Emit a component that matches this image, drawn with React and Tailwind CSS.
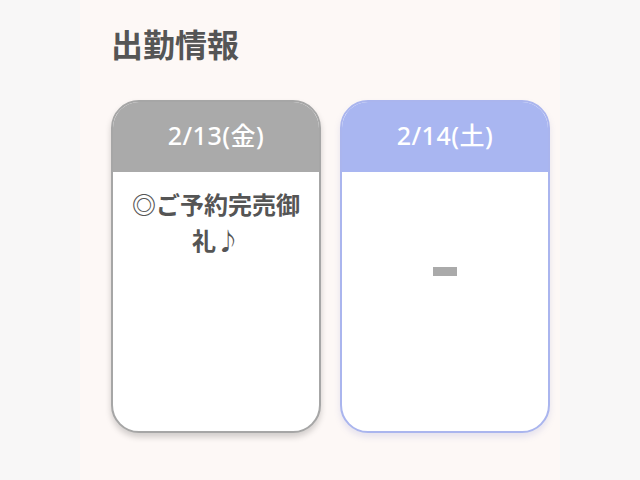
import React from 'react'

const days = [
  { date: '2/13(金)', head: 'bg-[#aaaaaa]', border: 'border-[#a6a6a6]', shadow: 'shadow-[0_4px_6px_rgba(0,0,0,0.18)]', lines: ['◎ご予約完売御', '礼♪'] },
  { date: '2/14(土)', head: 'bg-[#a9b6f1]', border: 'border-[#aab5ee]', shadow: 'shadow-[0_4px_6px_rgba(120,130,200,0.18)]', lines: null },
]

function DayCard({ day }) {
  return (
    <div className={`w-[210px] h-[333px] rounded-[28px] border-2 ${day.border} ${day.shadow} bg-white overflow-hidden flex flex-col`}>
      <div className={`${day.head} h-[70px] shrink-0 flex items-center justify-center text-white text-[25px] font-medium tracking-[0.5px] pb-[2px]`}>
        {day.date}
      </div>
      {day.lines ? (
        <div className="pt-[15px] text-center text-[24px] font-bold leading-[36px] text-[#555555]">
          {day.lines.map((l, i) => <div key={i}>{l}</div>)}
        </div>
      ) : (
        <div className="flex-1 flex items-center justify-center pb-[60px]">
          <div className="w-[24px] h-[9px] bg-[#aaaaaa]" />
        </div>
      )}
    </div>
  )
}

export default function App() {
  return (
    <div className="w-[640px] h-[480px] bg-[#f8f7f7] flex justify-center overflow-hidden" style={{ fontFamily: '"Noto Sans", "Noto Sans CJK JP", sans-serif' }}>
      <div className="w-[480px] h-full bg-[#fdf8f6] pl-[31px] pt-[25px]">
        <h2 className="text-[32px] font-bold text-[#555555] leading-[40px]">出勤情報</h2>
        <div className="flex gap-[19px] mt-[35px]">
          {days.map(d => <DayCard key={d.date} day={d} />)}
        </div>
      </div>
    </div>
  )
}
